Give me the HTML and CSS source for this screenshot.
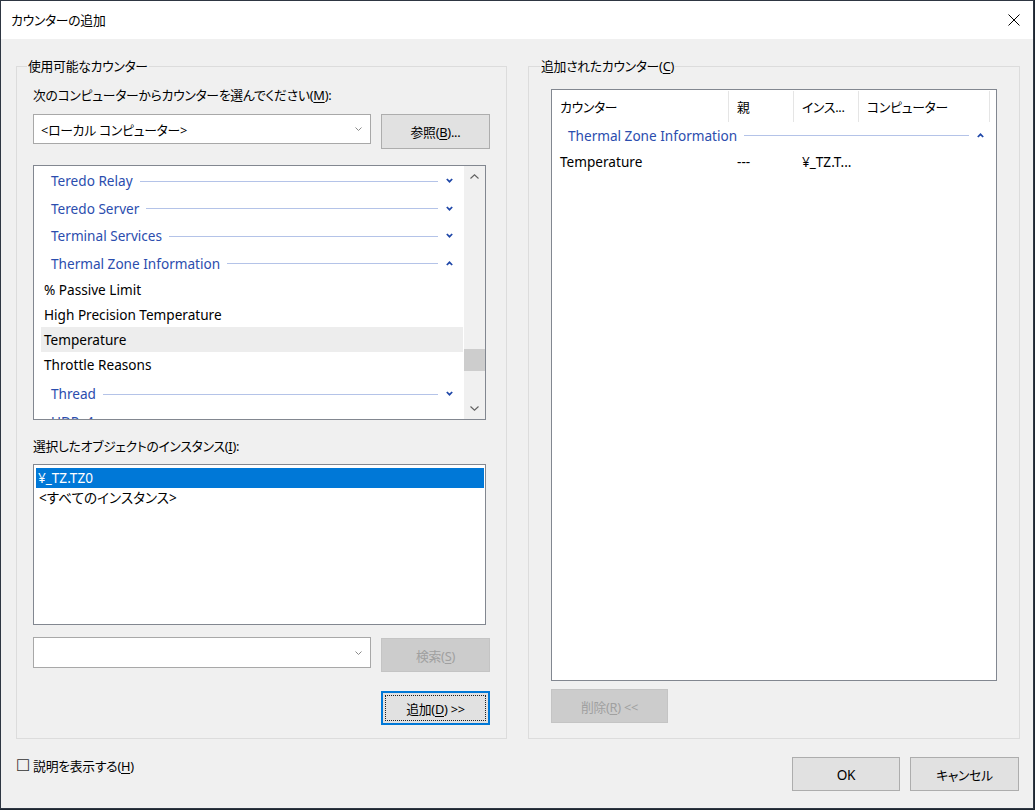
FILE: index.html
```html
<!DOCTYPE html>
<html>
<head>
    <meta charset="utf-8">
    <title>カウンターの追加</title>
<link rel="stylesheet" href="styles.css">
</head>
<body>
<div class="window">

    <div class="titlebar">
        <span class="title">カウンターの追加</span>
        <svg class="close" width="12" height="12" viewBox="0 0 12 12">
            <path d="M0.5 0.5 L11.5 11.5 M11.5 0.5 L0.5 11.5" stroke="#000" stroke-width="1" fill="none"/>
        </svg>
    </div>

    <div class="groups">

        <div class="group group-left">
            <div class="legend">使用可能なカウンター</div>
            <div class="label first-label">次のコンピューターからカウンターを選んでください(<u>M</u>):</div>

            <div class="row">
                <div class="combo">
                    <span>&lt;ローカル コンピューター&gt;</span>
                    <svg width="7" height="4" viewBox="0 0 7 4"><polyline points="0.5,0.5 3.5,3.5 6.5,0.5" fill="none" stroke="#8a8a8a" stroke-width="1"/></svg>
                </div>
                <button class="btn">参照(<u>B</u>)...</button>
            </div>

            <div class="counter-list">
                <div class="counter-items">
                    <div class="grp-head">
                        <span>Teredo Relay</span><i class="grp-line"></i>
                        <svg class="chev" width="7" height="5" viewBox="0 0 7 5"><polyline points="0.8,1 3.5,3.7 6.2,1" fill="none" stroke="#1f47a8" stroke-width="1.7"/></svg>
                    </div>
                    <div class="grp-head">
                        <span>Teredo Server</span><i class="grp-line"></i>
                        <svg class="chev" width="7" height="5" viewBox="0 0 7 5"><polyline points="0.8,1 3.5,3.7 6.2,1" fill="none" stroke="#1f47a8" stroke-width="1.7"/></svg>
                    </div>
                    <div class="grp-head">
                        <span>Terminal Services</span><i class="grp-line"></i>
                        <svg class="chev" width="7" height="5" viewBox="0 0 7 5"><polyline points="0.8,1 3.5,3.7 6.2,1" fill="none" stroke="#1f47a8" stroke-width="1.7"/></svg>
                    </div>
                    <div class="grp-head">
                        <span>Thermal Zone Information</span><i class="grp-line"></i>
                        <svg class="chev" width="7" height="5" viewBox="0 0 7 5"><polyline points="0.8,4 3.5,1.3 6.2,4" fill="none" stroke="#1f47a8" stroke-width="1.7"/></svg>
                    </div>
                    <div class="grp-items">
                        <div class="item">% Passive Limit</div>
                        <div class="item">High Precision Temperature</div>
                        <div class="item hover">Temperature</div>
                        <div class="item">Throttle Reasons</div>
                    </div>
                    <div class="grp-head">
                        <span>Thread</span><i class="grp-line"></i>
                        <svg class="chev" width="7" height="5" viewBox="0 0 7 5"><polyline points="0.8,1 3.5,3.7 6.2,1" fill="none" stroke="#1f47a8" stroke-width="1.7"/></svg>
                    </div>
                    <div class="grp-head">
                        <span>UDPv4</span><i class="grp-line"></i>
                        <svg class="chev" width="7" height="5" viewBox="0 0 7 5"><polyline points="0.8,1 3.5,3.7 6.2,1" fill="none" stroke="#1f47a8" stroke-width="1.7"/></svg>
                    </div>
                </div>
                <div class="vscroll">
                    <div class="arrow">
                        <svg width="9" height="5" viewBox="0 0 9 5"><polyline points="0.5,4.5 4.5,0.8 8.5,4.5" fill="none" stroke="#606060" stroke-width="1.1"/></svg>
                    </div>
                    <div class="track"><div class="thumb"></div></div>
                    <div class="arrow">
                        <svg width="9" height="5" viewBox="0 0 9 5"><polyline points="0.5,0.5 4.5,4.2 8.5,0.5" fill="none" stroke="#606060" stroke-width="1.1"/></svg>
                    </div>
                </div>
            </div>

            <div class="label inst-label">選択したオブジェクトのインスタンス(<u>I</u>):</div>
            <div class="instance-list">
                <div class="inst selected">¥_TZ.TZ0</div>
                <div class="inst">&lt;すべてのインスタンス&gt;</div>
            </div>

            <div class="row search-row">
                <div class="combo search-combo">
                    <span></span>
                    <svg width="7" height="4" viewBox="0 0 7 4"><polyline points="0.5,0.5 3.5,3.5 6.5,0.5" fill="none" stroke="#8a8a8a" stroke-width="1"/></svg>
                </div>
                <button class="btn disabled search-btn">検索(<u>S</u>)</button>
            </div>

            <div class="add-row">
                <button class="btn focused">追加(<u>D</u>) &gt;&gt;</button>
            </div>
        </div>

        <div class="group group-right">
            <div class="legend">追加されたカウンター(<u>C</u>)</div>

            <div class="added-list">
                <div class="cols col-head">
                    <div class="cell">カウンター</div>
                    <div class="cell">親</div>
                    <div class="cell">インス...</div>
                    <div class="cell">コンピューター</div>
                </div>
                <div class="grp-head added-head">
                    <span>Thermal Zone Information</span><i class="grp-line"></i>
                    <svg class="chev" width="7" height="5" viewBox="0 0 7 5"><polyline points="0.8,4 3.5,1.3 6.2,4" fill="none" stroke="#1f47a8" stroke-width="1.7"/></svg>
                </div>
                <div class="cols added-row latin">
                    <div class="cell">Temperature</div>
                    <div class="cell">---</div>
                    <div class="cell">¥_TZ.T...</div>
                    <div class="cell"></div>
                </div>
            </div>

            <button class="btn disabled del-btn">削除(<u>R</u>) &lt;&lt;</button>
        </div>

    </div>

    <div class="footer">
        <div class="show-desc"><span class="check">☐</span>説明を表示する(<u>H</u>)</div>
        <div class="dlg-buttons">
            <button class="btn ok-btn latin">OK</button>
            <button class="btn cancel-btn">キャンセル</button>
        </div>
    </div>

</div>
</body>
</html>
```

FILE: styles.css
```css
* {
	box-sizing: border-box;
}

body {
	margin: 0;
	background-color: #1d2530;
	font-family: "Noto Sans", "Noto Sans CJK JP", sans-serif;
	font-size: 12.8px;
	letter-spacing: -0.25px;
	font-feature-settings: "palt";
	color: #000000;
}

/* latin-only texts are a bit larger than the japanese ones */
.latin,
.grp-head,
.item,
.inst {
	font-size: 13.6px;
	letter-spacing: 0;
}

u {
	text-decoration-thickness: 1px;
	text-underline-offset: 2px;
}

.window {
	width: 1034px;
	height: 809px;
	border: 1px solid #2e3642;
	background-color: #F0F0F0;
	display: flex;
	flex-direction: column;
}

.titlebar {
	height: 38px;
	flex: none;
	background-color: #FFFFFF;
	display: flex;
	align-items: center;
	justify-content: space-between;
	padding: 0 13px 0 10px;
}

.title {
	line-height: 18px;
}

/* group boxes */

.groups {
	display: flex;
	gap: 21px;
	padding: 27px 0 0 15px;
}

.group {
	border: 1px solid #DCDCDC;
	height: 673px;
}

.group-left {
	width: 491px;
	padding: 0 16px;
}

.group-right {
	width: 492px;
	padding: 0 22px;
}

.legend {
	display: table;
	line-height: 18px;
	margin: -10px 0 0 -6px;
	padding: 0 1px;
	background-color: #F0F0F0;
}

.group-right .legend {
	margin-left: -11px;
}

.label {
	line-height: 18px;
}

.first-label {
	margin-top: 11px;
}

.row {
	display: flex;
	justify-content: space-between;
	align-items: flex-start;
	margin-top: 10px;
}

.combo {
	width: 338px;
	height: 30px;
	border: 1px solid #A8A8A8;
	background-color: #FFFFFF;
	display: flex;
	align-items: center;
	justify-content: space-between;
	padding: 0 8px 0 7px;
}

.btn {
	font: inherit;
	letter-spacing: inherit;
	font-feature-settings: "palt";
	color: #000000;
	width: 109px;
	height: 35px;
	padding: 0;
	background-color: #E1E1E1;
	border: 1px solid #ADADAD;
}

.btn.latin {
	font-size: 13.6px;
}

.btn.disabled {
	background-color: #CCCCCC;
	border-color: #C4C4C4;
	color: #A0A0A0;
}

.btn.focused {
	height: 34px;
	border: 2px solid #0078D7;
	outline: 1px dotted #202020;
	outline-offset: -5px;
}

/* counter list */

.counter-list {
	margin-top: 16px;
	width: 453px;
	height: 255px;
	border: 1px solid #828790;
	background-color: #FFFFFF;
	display: flex;
}

.counter-items {
	flex: 1;
	overflow: hidden;
	padding-top: 1px;
}

.grp-head {
	height: 27.5px;
	display: flex;
	align-items: center;
	padding: 0 11px 0 17px;
	color: #2B4DAE;
	white-space: nowrap;
}

.grp-line {
	flex: 1;
	height: 1px;
	margin: 1px 8px 0 7px;
	background-color: #B4C3E8;
}

.chev {
	flex: none;
}

.grp-items {
	margin-bottom: 3px;
}

.item {
	height: 25px;
	line-height: 25px;
	margin: 0 1px 0 7px;
	padding-left: 3px;
}

.item.hover {
	background-color: #EDEDED;
}

.vscroll {
	width: 21px;
	background-color: #F0F0F0;
	display: flex;
	flex-direction: column;
}

.arrow {
	height: 21px;
	display: flex;
	align-items: center;
	justify-content: center;
}

.track {
	flex: 1;
}

.thumb {
	margin-top: 162px;
	height: 22px;
	background-color: #CDCDCD;
}

/* instances */

.inst-label {
	margin-top: 17px;
}

.instance-list {
	margin-top: 9px;
	width: 453px;
	height: 161px;
	border: 1px solid #828790;
	background-color: #FFFFFF;
	padding: 3px 1px 0 2px;
}

.inst {
	height: 20px;
	line-height: 20px;
	padding-left: 3px;
}

.inst.selected {
	background-color: #0078D7;
	color: #FFFFFF;
	padding-left: 2px;
}

.search-row {
	margin-top: 12px;
}

.search-combo {
	height: 31px;
}

.search-btn {
	margin-top: 1px;
	height: 34px;
}

.add-row {
	display: flex;
	justify-content: flex-end;
	margin-top: 19px;
}

/* added counters */

.added-list {
	margin-top: 14px;
	height: 592px;
	border: 1px solid #828790;
	background-color: #FFFFFF;
}

.cols {
	display: grid;
	grid-template-columns: 177px 65px 65px 131px;
}

.col-head {
	height: 33px;
}

.col-head .cell {
	border-right: 1px solid #E5E5E5;
	margin: 1px 0;
	padding-left: 8px;
	display: flex;
	align-items: center;
}

.added-head {
	height: 24px;
	padding: 0 12px 0 16px;
}

.added-row {
	height: 28px;
	align-items: center;
}

.added-row .cell {
	padding-left: 8px;
}

.del-btn {
	margin-top: 8px;
	width: 117px;
	height: 34px;
}

/* footer */

.footer {
	display: flex;
	justify-content: space-between;
	align-items: flex-start;
	padding: 18px 14px 0 15px;
}

.show-desc {
	line-height: 18px;
	display: flex;
	align-items: center;
}

.check {
	font-family: "DejaVu Sans", sans-serif;
	font-size: 16px;
	line-height: 18px;
	margin-right: 3px;
	color: #333333;
}

.dlg-buttons {
	display: flex;
	gap: 10px;
}

.ok-btn {
	width: 108px;
	height: 34px;
}

.cancel-btn {
	width: 109px;
	height: 34px;
}
```
